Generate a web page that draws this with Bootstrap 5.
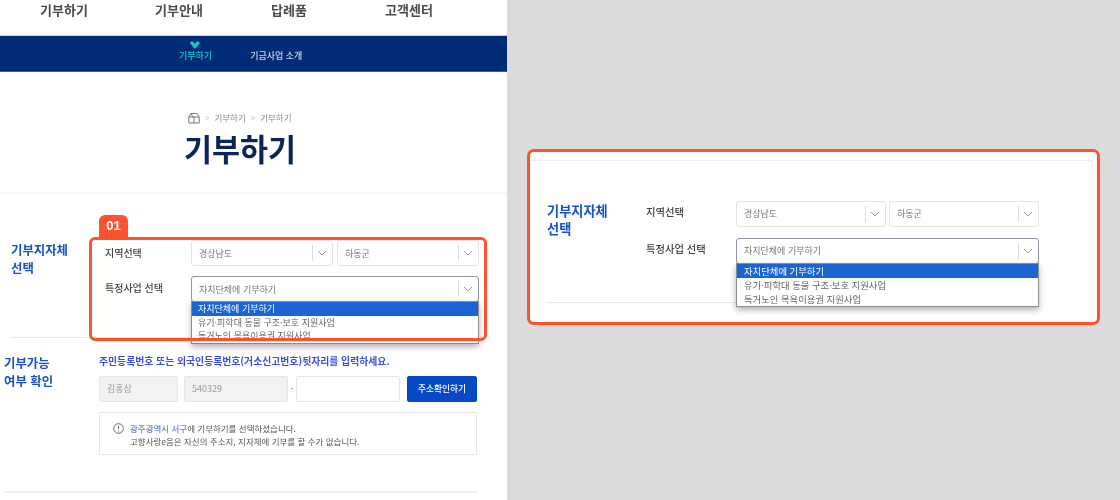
<!DOCTYPE html>
<html lang="ko">
<head>
<meta charset="utf-8">
<title>기부하기</title>
<link href="https://cdn.jsdelivr.net/npm/bootstrap@5.3.0/dist/css/bootstrap.min.css" rel="stylesheet">
<style>
html,body{margin:0;height:500px;overflow:hidden;background:#dcdcdc}
body{font-family:"Noto Sans CJK KR","Noto Sans",sans-serif;color:#444}
.stage{width:1120px;height:500px}
.lpane{width:507px;height:500px;background:#fff;position:relative;overflow:hidden;flex:none;filter:blur(.45px)}
.rpane{flex:1;min-width:0;filter:blur(.3px)}
.topnav{height:36px;border-bottom:1px solid #c9d1dd;padding-bottom:8px;font-size:13px;font-weight:700;color:#4a4a4a}
.topnav span{position:absolute;top:1px;line-height:18px}
.t1{left:40px}.t2{left:155px}.t3{left:271px}.t4{left:385px}
.subbar{height:36px;background:#002c77;border-bottom:1px solid #3a5a9a;font-size:9px;line-height:12px;color:#c8d3e6;padding-top:14px;padding-left:179px;gap:38px;font-weight:500}
.subon{color:#14c8d0;position:relative}
.heart{position:absolute;left:11px;top:-9px;width:10px;height:8px}
.crumb{height:13px;margin-top:39px;gap:5px;font-size:8.5px;line-height:13px;color:#8b8b8b;padding-left:188px}
.crumb i{font-style:normal;color:#c4c4c4;font-size:8px;transform:scaleY(1.2)}
.pagetitle{font-size:30.5px;font-weight:700;line-height:40px;color:#0b2559;margin:4px 0 0;text-align:center;padding-right:27px}
.band{height:2px;background:#f7f7f7;margin-top:24px}
.sec1{height:144px;position:relative}
.sect{font-weight:700;color:#1650c8;font-size:12.4px;line-height:17.5px;margin:0}
.sec1 .sect{position:absolute;left:11px;top:48px}
.grid1{position:absolute;left:105px;top:46px;width:374px}
.fld{display:grid;grid-template-columns:86px 1fr;align-items:start}
.fld1{margin-bottom:10px}
.fld1 .lab{padding-top:2.5px}
.grid1 .fld:not(.fld1) .lab{padding-top:2px}
.grid1 .sel{line-height:25px}
.lab{font-size:10px;line-height:20px;font-weight:500;color:#444}
.sels{gap:4px;min-width:0}
.sel{flex:1;height:26px;border:1px solid #e4e4e4;border-radius:3px;background:#fff;font-size:9px;line-height:24px;padding-left:7px;color:#777;position:relative}
.sel::after{content:"";position:absolute;right:19px;top:4px;height:16px;border-left:1px solid #ddd}
.sel svg{position:absolute;right:5px;top:9px;width:10px;height:6px}
.selon{border-color:#8d96a3}
.dd{position:absolute;left:-1px;right:-1px;top:24px;background:#fff;border:1px solid #8c8c8c;box-shadow:0 3px 6px rgba(0,0,0,.3);font-size:9px;line-height:13.7px;color:#666;z-index:2;padding:0;margin:0;list-style:none}
.dd li{padding-left:6px;white-space:nowrap}
.dd .on{background:#1a65d2;color:#fff}
.rule1{position:absolute;left:11px;width:466px;bottom:0;height:1px;background:#e6e6e6}
.anno{position:absolute;left:89px;top:237px;width:398px;height:104px;border:3px solid #fb5230;border-radius:6px;z-index:3;pointer-events:none}
.tag{position:absolute;left:99px;top:215px;width:29px;height:22px;background:#fb5230;color:#fff;border-radius:6px 6px 0 0;font:700 13px/21px "Liberation Sans",sans-serif;text-align:center;z-index:3}
.sec2{position:relative;height:153px}
.sec2 .sect{position:absolute;left:4px;top:17px}
.hint{position:absolute;left:99px;top:16px;margin:0;font-size:9.85px;line-height:14px;font-weight:700;color:#3a4fe0;white-space:nowrap}
.inrow{position:absolute;left:99px;top:38px;width:378px;gap:6px;align-items:center}
.inrow>*{flex:none}
.inp{height:26px;border:1px solid #e6e6e6;border-radius:2px;background:#fff;font-size:9px;line-height:24px;color:#999;padding-left:7px}
.inp.g{background:#f2f2f2}
.i1{width:79px}.i2{width:104px}.i3{width:104px}
.dash{width:6px;margin:0 -5px;font-size:9px;color:#888;text-align:center}
.gobtn{--bs-btn-padding-x:0;--bs-btn-padding-y:0;--bs-btn-font-size:8.7px;--bs-btn-font-weight:500;--bs-btn-bg:#0649c5;--bs-btn-border-color:#0649c5;--bs-btn-color:#fff;--bs-btn-border-radius:2px;width:70px;height:26px;margin-left:1px;line-height:24px}
.note{position:absolute;left:99px;top:74px;width:378px;height:43px;border:1px solid #e6e6e6;border-radius:1px;padding:9px 0 0 30px;font-size:8.5px;line-height:13px;color:#555}
.note svg{position:absolute;left:13px;top:10px;width:11px;height:11px}
.note b{font-weight:500;color:#6a86c8}
.rule2{height:2px;background:#eee;margin-left:4px;width:473px}
.abox{margin:149px 20px 0;height:176px;border:3px solid #fb5230;border-radius:7px;background:#fff;position:relative;overflow:hidden}
.rframe{position:absolute;left:-3px;top:8px;right:5px;bottom:-3px;border-top:1px solid #eee;border-right:1px solid #eee}
.abox .sect{position:absolute;left:17px;top:50px;font-size:13.2px;line-height:18px}
.grid2{position:absolute;left:116px;top:49px;width:393px}
.grid2 .fld{grid-template-columns:90px 1fr}
.grid2 .fld1{margin-bottom:11px}
.grid2 .fld1 .lab{padding-top:0}
.grid2 .lab{font-size:10.3px;line-height:22px}
.grid2 .sels{gap:3px}
.grid2 .dd{top:24px;font-size:9.35px;line-height:14px}
.grid2 .dd li{padding-left:7px}
.rrule{position:absolute;left:17px;top:150px;width:490px;height:1px;background:#e6e6e6}
</style>
</head>
<body>
<div class="stage d-flex">
  <div class="lpane">
    <div class="topnav position-relative"><span class="t1">기부하기</span><span class="t2">기부안내</span><span class="t3">답례품</span><span class="t4">고객센터</span></div>
    <div class="subbar d-flex">
      <span class="subon"><svg class="heart" viewBox="0 0 10 8"><path d="M0 2 2 0 5 2.6 8 0 10 2 5 8Z" fill="#14c8d0"/></svg>기부하기</span>
      <span>기금사업 소개</span>
    </div>
    <div class="crumb d-flex align-items-center">
      <svg width="12" height="12" viewBox="0 0 12 12" fill="none" stroke="#777" stroke-width="1"><path d="M.8 11V5L3 1.5H9L11.2 5V11Z"/><path d="M.8 5H11.2M6 5V11M3 1.5 5 5"/></svg>
      <i>&gt;</i><span>기부하기</span><i>&gt;</i><span>기부하기</span>
    </div>
    <h1 class="pagetitle">기부하기</h1>
    <div class="band"></div>
    <section class="sec1">
      <h2 class="sect">기부지자체<br>선택</h2>
      <div class="grid1">
        <div class="fld fld1">
          <div class="lab">지역선택</div>
          <div class="sels d-flex">
            <div class="sel">경상남도<svg viewBox="0 0 10 6" fill="none" stroke="#999"><path d="M1 1 5 5 9 1"/></svg></div>
            <div class="sel">하동군<svg viewBox="0 0 10 6" fill="none" stroke="#999"><path d="M1 1 5 5 9 1"/></svg></div>
          </div>
        </div>
        <div class="fld">
          <div class="lab">특정사업 선택</div>
          <div class="sel selon">자치단체에 기부하기<svg viewBox="0 0 10 6" fill="none" stroke="#999"><path d="M1 1 5 5 9 1"/></svg>
            <ul class="dd"><li class="on">자치단체에 기부하기</li><li>유기·피학대 동물 구조·보호 지원사업</li><li>독거노인 목욕이용권 지원사업</li></ul>
          </div>
        </div>
      </div>
      <div class="rule1"></div>
    </section>
    <section class="sec2">
      <h2 class="sect">기부가능<br>여부 확인</h2>
      <p class="hint">주민등록번호 또는 외국인등록번호(거소신고번호)뒷자리를 입력하세요.</p>
      <div class="inrow d-flex">
        <div class="inp g i1">김홍삼</div>
        <div class="inp g i2">540329</div>
        <div class="dash">-</div>
        <div class="inp i3"></div>
        <button class="btn gobtn" type="button">주소확인하기</button>
      </div>
      <div class="note">
        <svg viewBox="0 0 11 11" fill="none" stroke="#666"><circle cx="5.5" cy="5.5" r="4.8"/><path d="M5.5 2.8V6.2M5.5 7.3V8.3"/></svg>
        <b>광주광역시 서구</b>에 기부하기를 선택하셨습니다.<br>고향사랑e음은 자신의 주소지, 지자체에 기부를 할 수가 없습니다.
      </div>
    </section>
    <div class="rule2"></div>
    <div class="anno"></div>
    <div class="tag">01</div>
  </div>
  <div class="rpane">
    <div class="abox">
      <div class="rframe"></div>
      <h2 class="sect">기부지자체<br>선택</h2>
      <div class="grid2">
        <div class="fld fld1">
          <div class="lab">지역선택</div>
          <div class="sels d-flex">
            <div class="sel">경상남도<svg viewBox="0 0 10 6" fill="none" stroke="#999"><path d="M1 1 5 5 9 1"/></svg></div>
            <div class="sel">하동군<svg viewBox="0 0 10 6" fill="none" stroke="#999"><path d="M1 1 5 5 9 1"/></svg></div>
          </div>
        </div>
        <div class="fld">
          <div class="lab">특정사업 선택</div>
          <div class="sel selon">자치단체에 기부하기<svg viewBox="0 0 10 6" fill="none" stroke="#999"><path d="M1 1 5 5 9 1"/></svg>
            <ul class="dd"><li class="on">자치단체에 기부하기</li><li>유기·피학대 동물 구조·보호 지원사업</li><li>독거노인 목욕이용권 지원사업</li></ul>
          </div>
        </div>
      </div>
      <div class="rrule"></div>
    </div>
  </div>
</div>
<script src="https://cdn.jsdelivr.net/npm/bootstrap@5.3.0/dist/js/bootstrap.bundle.min.js"></script>
</body>
</html>
